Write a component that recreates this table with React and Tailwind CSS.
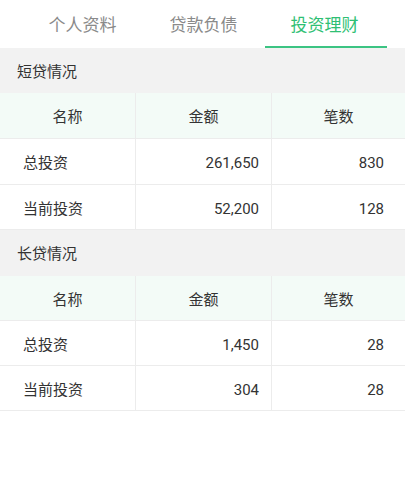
import React from "react";

const font = { fontFamily: 'Roboto, "Noto Sans CJK SC", sans-serif' };

function Section({ title, rows, first }) {
  return (
    <div>
      <div className={`${first ? "h-[45px]" : "h-[46px]"} bg-[#f2f2f2] flex items-center pl-[17px] pt-[3px] text-[15px] text-[#333]`}>
        {title}
      </div>
      <div className={`${first ? "h-[46px]" : "h-[45px]"} grid grid-cols-[136px_136px_1fr] bg-[#f3fbf7] border-b border-[#ececec] text-[15px] text-[#333]`}>
        <div className="flex items-center justify-center pt-[4px] border-r border-[#ececec]">名称</div>
        <div className="flex items-center justify-center pt-[4px] border-r border-[#ececec]">金额</div>
        <div className="flex items-center justify-center pt-[4px]">笔数</div>
      </div>
      {rows.map((r, i) => (
        <div
          key={i}
          className={`${first && i === 0 ? "h-[46px]" : "h-[45px]"} grid grid-cols-[136px_136px_1fr] bg-white border-b border-[#ececec] text-[15px] text-[#333]`}
        >
          <div className="flex items-center pl-[23px] pt-[4px] border-r border-[#ececec]">{r[0]}</div>
          <div className="flex items-center justify-end pr-[12px] pt-[4px] border-r border-[#ececec]">{r[1]}</div>
          <div className="flex items-center justify-end pr-[21px] pt-[4px]">{r[2]}</div>
        </div>
      ))}
    </div>
  );
}

export default function App() {
  const tabs = ["个人资料", "贷款负债", "投资理财"];
  return (
    <div className="w-[405px] h-[500px] bg-white" style={font}>
      <div className="h-[48px] grid grid-cols-[121px_121px_121px] pl-[22px]">
        {tabs.map((t, i) => (
          <div key={t} className="relative flex items-center justify-center pt-[3px]">
            <span className={`text-[17px] ${i === 2 ? "text-[#2fbf74]" : "text-[#8a8a8a]"}`}>{t}</span>
            {i === 2 && <div className="absolute left-[1px] right-[-2px] bottom-0 h-[2px] bg-[#3cc483]" />}
          </div>
        ))}
      </div>
      <Section
        first
        title="短贷情况"
        rows={[
          ["总投资", "261,650", "830"],
          ["当前投资", "52,200", "128"],
        ]}
      />
      <Section
        title="长贷情况"
        rows={[
          ["总投资", "1,450", "28"],
          ["当前投资", "304", "28"],
        ]}
      />
    </div>
  );
}
